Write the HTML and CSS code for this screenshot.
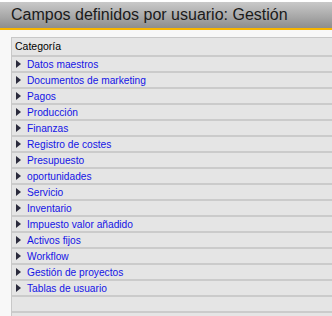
FILE: index.html
```html
<!DOCTYPE html>
<html lang="es">
<head>
    <meta charset="UTF-8">
    <title>Campos definidos por usuario: Gestión</title>
    <link rel="stylesheet" href="styles.css">
</head>
<body>
    <div class="window">
        <!-- Barra de título -->
        <div class="title-bar">Campos definidos por usuario: Gestión</div>
        <div class="content">
            <div class="tree">
                <div class="tree-header">Categoría</div>
                <div class="row"><span class="arrow"></span><a class="link">Datos maestros</a></div>
                <div class="row"><span class="arrow"></span><a class="link">Documentos de marketing</a></div>
                <div class="row"><span class="arrow"></span><a class="link">Pagos</a></div>
                <div class="row"><span class="arrow"></span><a class="link">Producción</a></div>
                <div class="row"><span class="arrow"></span><a class="link">Finanzas</a></div>
                <div class="row"><span class="arrow"></span><a class="link">Registro de costes</a></div>
                <div class="row"><span class="arrow"></span><a class="link">Presupuesto</a></div>
                <div class="row"><span class="arrow"></span><a class="link">oportunidades</a></div>
                <div class="row"><span class="arrow"></span><a class="link">Servicio</a></div>
                <div class="row"><span class="arrow"></span><a class="link">Inventario</a></div>
                <div class="row"><span class="arrow"></span><a class="link">Impuesto valor añadido</a></div>
                <div class="row"><span class="arrow"></span><a class="link">Activos fijos</a></div>
                <div class="row"><span class="arrow"></span><a class="link">Workflow</a></div>
                <div class="row"><span class="arrow"></span><a class="link">Gestión de proyectos</a></div>
                <div class="row"><span class="arrow"></span><a class="link">Tablas de usuario</a></div>
                <!-- Filas vacías -->
                <div class="row"></div>
                <div class="row"></div>
            </div>
        </div>
    </div>
</body>
</html>
```
FILE: styles.css
```css
body {
    margin: 0;
    font-family: "Liberation Sans", Arial, sans-serif;
    background-color: #ffffff;
    overflow: hidden;
}
.window {
    padding-top: 2px;
    width: 332px;
    height: 314px;
    display: flex;
    flex-direction: column;
    overflow: hidden;
}
.title-bar {
    height: 26px;
    line-height: 26px;
    padding-left: 11px;
    font-size: 16px;
    color: #1a1a1a;
    background: linear-gradient(#c9c9c9, #8e8e8e);
    border-bottom: 2px solid #f7b500;
}
.content {
    flex: 1;
    display: flex;
    padding-top: 7px;
    padding-left: 11px;
    background-color: #f8f8f8;
}
.tree {
    flex: 1;
    border-left: 1px solid #c8c8c8;
    border-top: 1px solid #c8c8c8;
}
.tree-header {
    height: 17px;
    line-height: 17px;
    padding-left: 3px;
    font-size: 10.5px;
    color: #000000;
    background-color: #e5e5e5;
    border-bottom: 2px solid #cbcbcb;
}
.row {
    display: flex;
    align-items: center;
    height: 14px;
    background-color: #e5e5e5;
    border-bottom: 2px solid #cbcbcb;
}
.arrow {
    width: 0;
    height: 0;
    margin-left: 4px;
    margin-right: 6px;
    border-top: 4px solid transparent;
    border-bottom: 4px solid transparent;
    border-left: 5px solid #2b2b3c;
}
.link {
    font-size: 10.2px;
    color: #1414e6;
}
```
